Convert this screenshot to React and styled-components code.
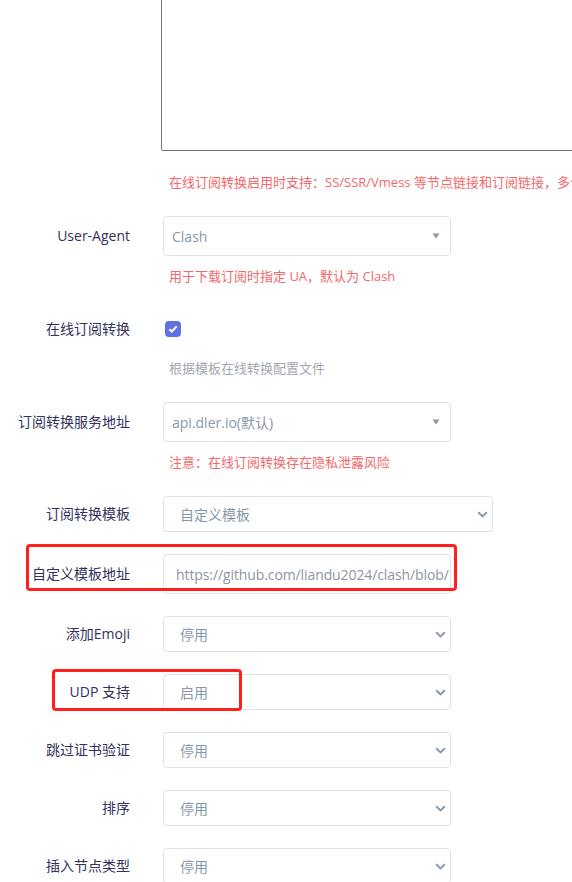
import React from "react";
import styled, { createGlobalStyle } from "styled-components";

const GlobalStyle = createGlobalStyle`
  html, body {
    margin: 0;
    padding: 0;
    background: #fff;
    overflow: hidden;
  }
  body {
    font-family: "Open Sans", "Noto Sans CJK SC", sans-serif;
    font-size: 14px;
    color: #32325d;
  }
`;

const Form = styled.div`
  display: flex;
  flex-direction: column;
  gap: 22px;
  width: 572px;
`;

const Group = styled.div`
  position: relative;
  display: grid;
  grid-template-columns: 130px 1fr;
  column-gap: 33px;
  align-items: center;
`;

const Label = styled.label`
  text-align: right;
  font-size: 14px;
  line-height: 20px;
  color: #32325d;
  white-space: nowrap;
`;

const Control = styled.div`
  grid-column: 2;
  min-width: 0;
`;

const Help = styled.div`
  grid-column: 2;
  margin-top: ${(p) => p.$mt || 8}px;
  padding-left: 6px;
  font-size: 13px;
  line-height: 24px;
  white-space: nowrap;
  overflow: hidden;
  color: ${(p) => (p.$muted ? "#a3a7b1" : "#f5676a")};
`;

const TextArea = styled.div`
  margin-left: -2px;
  width: 440px;
  height: 151px;
  border: 1px solid #767676;
  border-top: none;
  border-radius: 0 0 0 2px;
  box-sizing: border-box;
`;

const SelectBox = styled.div`
  display: flex;
  align-items: center;
  justify-content: space-between;
  box-sizing: border-box;
  width: ${(p) => p.$w || 288}px;
  height: ${(p) => p.$h || 36}px;
  padding: 0 ${(p) => p.$pr ?? 4}px 0 ${(p) => p.$pl || 16}px;
  border: 1px solid #dfe2e8;
  border-radius: 4px;
  background: #fff;
  font-size: 14px;
  color: #8898aa;
  overflow: hidden;
  white-space: nowrap;
`;

const InputText = styled.span`
  overflow: hidden;
  white-space: nowrap;
  color: #8e96a3;
  letter-spacing: -0.1px;
`;

const Checkbox = styled.span`
  display: inline-flex;
  align-items: center;
  justify-content: center;
  width: 16px;
  height: 16px;
  margin-left: 2px;
  border-radius: 4px;
  background: #5e72e4;
`;

const CheckRow = styled.div`
  height: 38px;
  display: flex;
  align-items: center;
`;

const Annot = styled.div`
  position: absolute;
  top: ${(p) => p.$top}px;
  left: ${(p) => p.$left}px;
  width: ${(p) => p.$w}px;
  height: ${(p) => p.$h}px;
  border: 3px solid #ff1f1f;
  border-radius: 4px;
  box-sizing: border-box;
  pointer-events: none;
`;

const Caret = () => (
  <svg width="8" height="6" viewBox="0 0 8 6">
    <polygon points="0.5,0.5 7.5,0.5 4,5.5" fill="#8898aa" />
  </svg>
);

const Chevron = () => (
  <svg width="11" height="7" viewBox="0 0 11 7">
    <path d="M1.2 1.2 L5.5 5.4 L9.8 1.2" fill="none" stroke="#8898aa" strokeWidth="2" />
  </svg>
);

const Dropdown = ({ value, w }) => (
  <SelectBox $w={w} $pl={8} $h={40} $pr={10}>
    <span>{value}</span>
    <Caret />
  </SelectBox>
);

const Select = ({ value, w }) => (
  <SelectBox $w={w}>
    <span>{value}</span>
    <Chevron />
  </SelectBox>
);

const Row = ({ label, children, annot }) => (
  <Group>
    <Label>{label}</Label>
    <Control>{children}</Control>
    {annot}
  </Group>
);

export default function App() {
  return (
    <>
      <GlobalStyle />
      <Form>
        <Group>
          <Control>
            <TextArea />
          </Control>
          <Help $mt={19}>
            在线订阅转换启用时支持：SS/SSR/Vmess 等节点链接和订阅链接，多个
          </Help>
        </Group>

        <Group>
          <Label>User-Agent</Label>
          <Control>
            <Dropdown value="Clash" />
          </Control>
          <Help>用于下载订阅时指定 UA，默认为 Clash</Help>
        </Group>

        <Group>
          <Label>在线订阅转换</Label>
          <Control>
            <CheckRow>
              <Checkbox>
                <svg width="10" height="8" viewBox="0 0 10 8">
                  <path d="M1.3 4.2 L3.8 6.5 L8.7 1.4" fill="none" stroke="#fff" strokeWidth="2" />
                </svg>
              </Checkbox>
            </CheckRow>
          </Control>
          <Help $muted>根据模板在线转换配置文件</Help>
        </Group>

        <Group>
          <Label>订阅转换服务地址</Label>
          <Control>
            <Dropdown value="api.dler.io(默认)" />
          </Control>
          <Help>注意：在线订阅转换存在隐私泄露风险</Help>
        </Group>

        <Row label="订阅转换模板">
          <Select value="自定义模板" w={330} />
        </Row>

        <Row
          label="自定义模板地址"
          annot={<Annot $top={-10} $left={26} $w={431} $h={47} />}
        >
          <SelectBox $h={40} $pl={12} $pr={1}>
            <InputText>https://github.com/liandu2024/clash/blob/m</InputText>
          </SelectBox>
        </Row>

        <Row label="添加Emoji">
          <Select value="停用" />
        </Row>

        <Row
          label="UDP 支持"
          annot={<Annot $top={-5} $left={52} $w={190} $h={42} />}
        >
          <Select value="启用" />
        </Row>

        <Row label="跳过证书验证">
          <Select value="停用" />
        </Row>

        <Row label="排序">
          <Select value="停用" />
        </Row>

        <Row label="插入节点类型">
          <Select value="停用" />
        </Row>
      </Form>
    </>
  );
}
